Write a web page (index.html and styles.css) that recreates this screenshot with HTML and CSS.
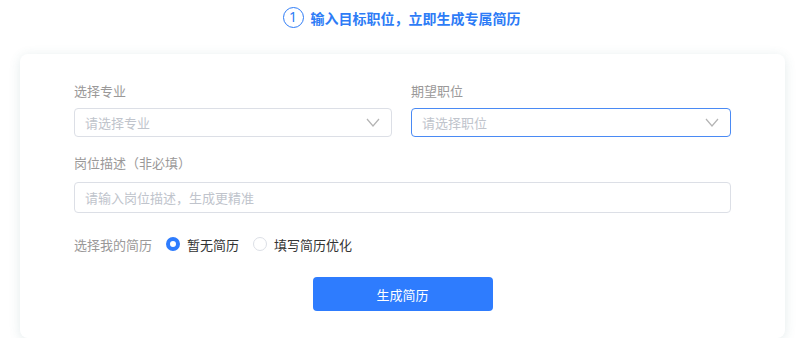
FILE: index.html
```html
<!DOCTYPE html>
<html lang="zh-CN">
<head>
<meta charset="utf-8">
<link rel="stylesheet" href="styles.css">
</head>
<body>
<div class="title">
  <span class="step">1</span>
  <span class="title-text">输入目标职位，立即生成专属简历</span>
</div>
<div class="card">
  <div class="row two">
    <div class="field">
      <div class="label">选择专业</div>
      <div class="select">
        <span class="ph">请选择专业</span>
        <svg class="chev" width="14" height="9" viewBox="0 0 14 9"><path d="M1 1 L7 8 L13 1" fill="none" stroke="#b4b4b4" stroke-width="1.2"/></svg>
      </div>
    </div>
    <div class="field">
      <div class="label">期望职位</div>
      <div class="select focus">
        <span class="ph">请选择职位</span>
        <svg class="chev" width="14" height="9" viewBox="0 0 14 9"><path d="M1 1 L7 8 L13 1" fill="none" stroke="#b4b4b4" stroke-width="1.2"/></svg>
      </div>
    </div>
  </div>
  <div class="field desc">
    <div class="label">岗位描述（非必填）</div>
    <div class="input"><span class="ph">请输入岗位描述，生成更精准</span></div>
  </div>
  <div class="radios">
    <span class="rlabel">选择我的简历</span>
    <span class="radio checked"></span><span class="rtext">暂无简历</span>
    <span class="radio"></span><span class="rtext">填写简历优化</span>
  </div>
  <div class="actions">
    <button class="btn">生成简历</button>
  </div>
</div>
</body>
</html>
```
FILE: styles.css
```css
* { box-sizing: border-box; }
body {
  margin: 0;
  background: #fff;
  font-family: "Noto Sans CJK SC", "Noto Sans", sans-serif;
  font-size: 13px;
}
.title {
  height: 35px;
  display: flex;
  align-items: center;
  justify-content: center;
  gap: 7px;
  padding-right: 2px;
}
.step {
  width: 21px;
  height: 21px;
  border: 1.5px solid #2e7cf6;
  border-radius: 50%;
  color: #2e7cf6;
  font-size: 14px;
  line-height: 18px;
  text-align: center;
  font-family: "Noto Sans", sans-serif;
}
.title-text {
  color: #2e7cf6;
  font-size: 14px;
  font-weight: bold;
}
.card {
  margin: 19px 20px 0;
  height: 284px;
  background: #fff;
  border-radius: 8px;
  box-shadow: 0 2px 12px rgba(60, 110, 120, 0.14);
  padding: 28px 54px 0;
}
.row.two {
  display: grid;
  grid-template-columns: 318px 320px;
  column-gap: 19px;
}
.label {
  color: #9a9898;
  font-size: 13px;
  line-height: 18px;
  height: 18px;
  margin-bottom: 8px;
}
.select {
  height: 29px;
  border: 1px solid #dcdfe6;
  border-radius: 4px;
  display: flex;
  align-items: center;
  justify-content: space-between;
  padding: 0 10px 0 10px;
}
.select.focus {
  border-color: #4a8af4;
}
.ph {
  color: #c0c4cc;
  font-size: 13px;
}
.chev { margin-right: 1px; }
.desc { margin-top: 17px; }
.desc .label { margin-bottom: 10px; }
.input {
  height: 31px;
  width: 657px;
  border: 1px solid #dcdfe6;
  border-radius: 4px;
  display: flex;
  align-items: center;
  padding: 0 10px;
}
.radios {
  margin-top: 21px;
  height: 20px;
  display: flex;
  align-items: center;
}
.rlabel {
  color: #9a9898;
  margin-right: 14px;
}
.radio {
  width: 14px;
  height: 14px;
  border-radius: 50%;
  border: 1px solid #dcdfe6;
  margin-right: 7px;
}
.radio.checked {
  border: 4px solid #2e7cfe;
  background: #fff;
}
.rtext {
  color: #333;
  margin-right: 14px;
}
.actions {
  margin-top: 23px;
  display: flex;
  justify-content: center;
}
.btn {
  width: 180px;
  height: 34px;
  border: 0;
  border-radius: 4px;
  background: #2e7cfe;
  color: #fff;
  font-family: "Noto Sans CJK SC", sans-serif;
  font-size: 13px;
}
```
